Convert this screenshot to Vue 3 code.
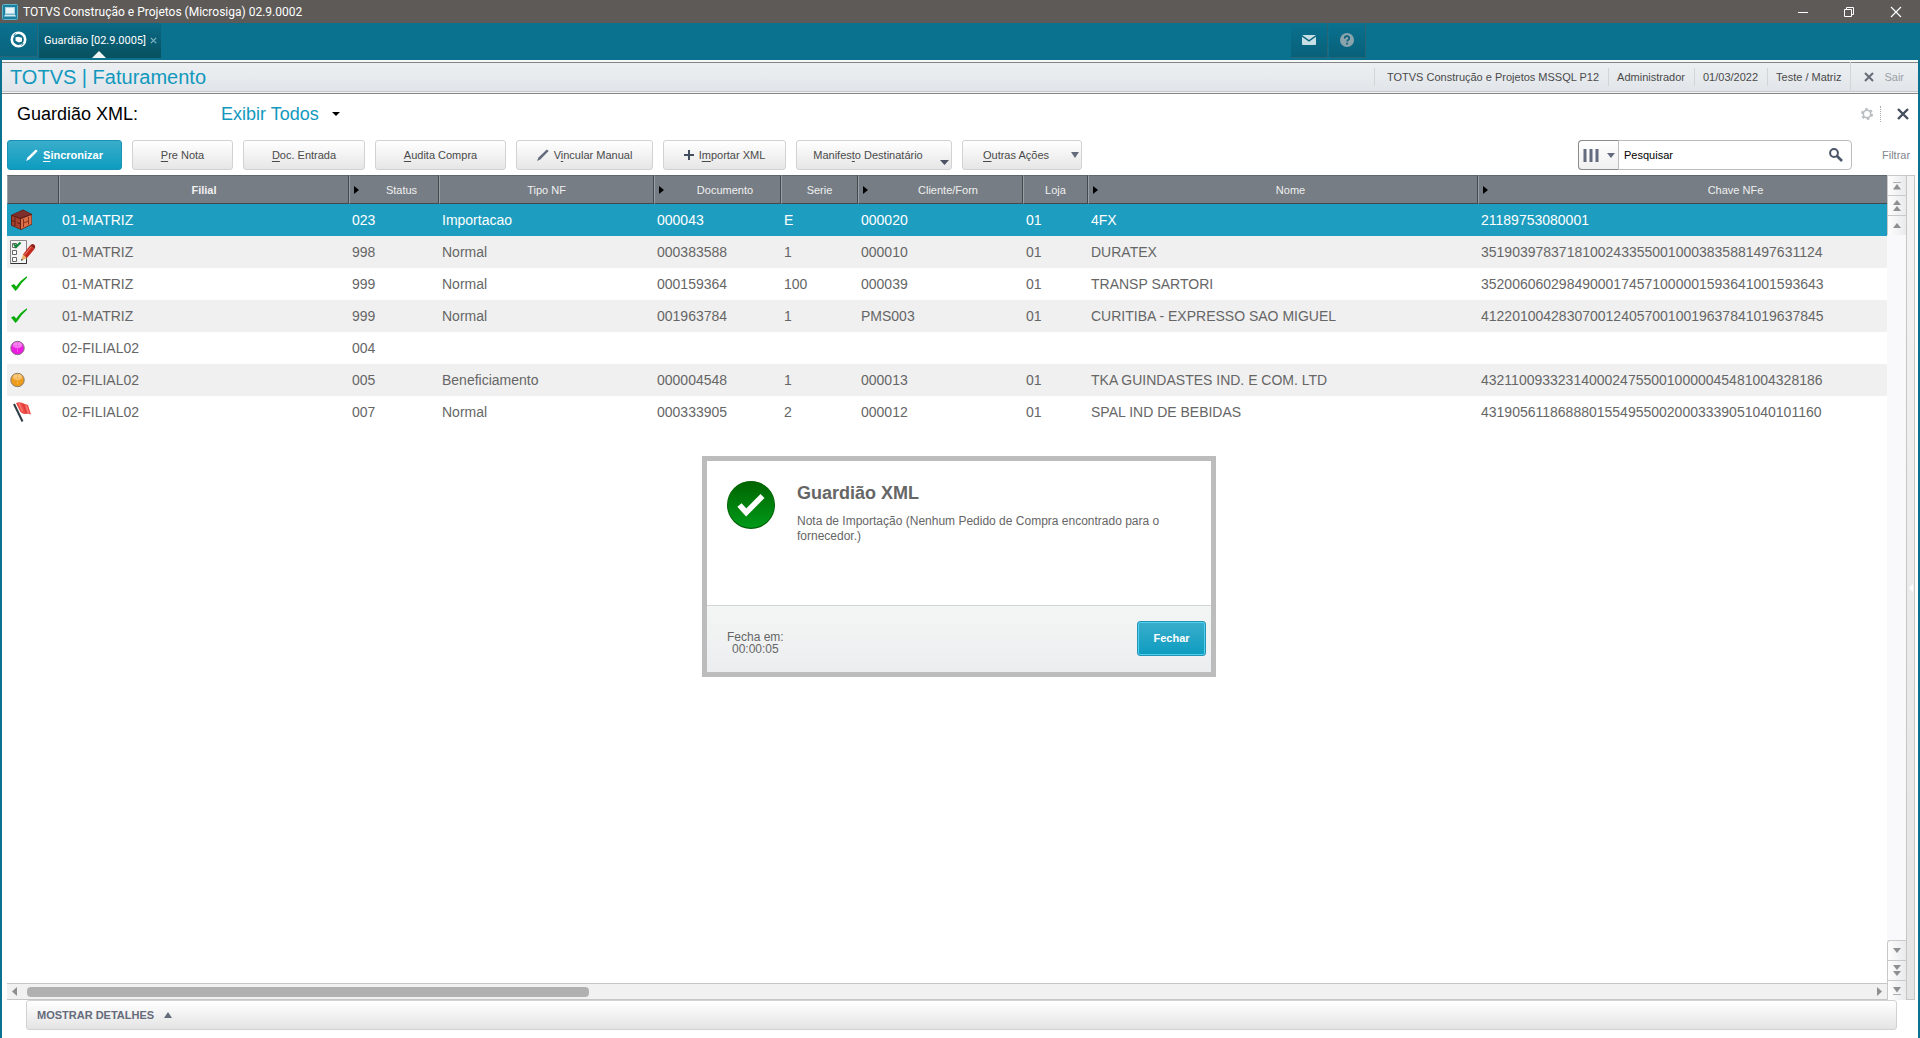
<script setup>
import { ref } from 'vue'

const search = ref('Pesquisar')
const filter = ref('Exibir Todos')

const columns = [
  { label: '', width: 52 },
  { label: 'Filial', width: 290, bold: true },
  { label: 'Status', width: 90, sort: true },
  { label: 'Tipo NF', width: 215 },
  { label: 'Documento', width: 127, sort: true },
  { label: 'Serie', width: 77 },
  { label: 'Cliente/Forn', width: 165, sort: true },
  { label: 'Loja', width: 65 },
  { label: 'Nome', width: 390, sort: true },
  { label: 'Chave NFe', width: 500, sort: true }
]

const rows = [
  { icon: 'box', cells: ['01-MATRIZ', '023', 'Importacao', '000043', 'E', '000020', '01', '4FX', '21189753080001'] },
  { icon: 'list', cells: ['01-MATRIZ', '998', 'Normal', '000383588', '1', '000010', '01', 'DURATEX', '35190397837181002433550010003835881497631124'] },
  { icon: 'check', cells: ['01-MATRIZ', '999', 'Normal', '000159364', '100', '000039', '01', 'TRANSP SARTORI', '35200606029849000174571000001593641001593643'] },
  { icon: 'check', cells: ['01-MATRIZ', '999', 'Normal', '001963784', '1', 'PMS003', '01', 'CURITIBA - EXPRESSO SAO MIGUEL', '41220100428307001240570010019637841019637845'] },
  { icon: 'pink', cells: ['02-FILIAL02', '004', '', '', '', '', '', '', ''] },
  { icon: 'orange', cells: ['02-FILIAL02', '005', 'Beneficiamento', '000004548', '1', '000013', '01', 'TKA GUINDASTES IND. E COM. LTD', '43211009332314000247550010000045481004328186'] },
  { icon: 'flag', cells: ['02-FILIAL02', '007', 'Normal', '000333905', '2', '000012', '01', 'SPAL IND DE BEBIDAS', '43190561186888015549550020003339051040101160'] }
]
</script>

<template>
  <div class="app">
    <header class="titlebar">
      <svg class="app-icon" width="16" height="16" viewBox="0 0 16 16">
        <rect x="0.5" y="0.5" width="15" height="15" rx="1" fill="#1b7f9f" stroke="#5fb4cc" />
        <rect x="3.5" y="3.5" width="9" height="6" fill="#e8f4f8" stroke="#a9d5e2" />
        <path d="M2 12.5h12l-1-2H3z" fill="#d2ebf3" />
      </svg>
      <span class="title">TOTVS Construção e Projetos (Microsiga) 02.9.0002</span>
      <div class="win-buttons">
        <button aria-label="Minimizar"><svg width="12" height="12" viewBox="0 0 12 12"><path d="M1 6.5h10" stroke="#fff" /></svg></button>
        <button aria-label="Restaurar"><svg width="12" height="12" viewBox="0 0 12 12"><path d="M1.500 3.500h7v7h-7zM3.500 3.500v-2h7v7h-2" fill="none" stroke="#fff" /></svg></button>
        <button aria-label="Fechar janela"><svg width="12" height="12" viewBox="0 0 12 12"><path d="M1 1l10 10M11 1L1 11" stroke="#fff" stroke-width="1.200" /></svg></button>
      </div>
    </header>

    <nav class="tabs">
      <button class="home" aria-label="Início">
        <svg width="17" height="17" viewBox="0 0 17 17">
          <circle cx="8.500" cy="8.500" r="6.700" fill="none" stroke="#fff" stroke-width="2.600" />
          <path d="M5.500 6.200L8 5.800l4 1v3.600l-3.200 1-3.300-1.700z" fill="#fff" />
          <path d="M5.500 2.500L3.800 5M11.500 14.500l1.700-2.500" stroke="#0a6c89" />
        </svg>
      </button>
      <button class="tab">
        <span>Guardião [02.9.0005]</span>
        <svg width="7" height="7" viewBox="0 0 7 7"><path d="M0.800 0.800l5.400 5.400M6.200 0.800L0.800 6.200" stroke="#7fb4c2" stroke-width="1.200" /></svg>
        <i class="tab-mark"></i>
      </button>
      <div class="tab-tools">
        <button aria-label="Mensagens">
          <svg width="14" height="10" viewBox="0 0 14 10"><rect width="14" height="10" rx="1" fill="#c9dfe6" /><path d="M0 0.800l7 5 7-5" fill="none" stroke="#0a6680" stroke-width="1.400" /></svg>
        </button>
        <button aria-label="Ajuda">
          <svg width="14" height="14" viewBox="0 0 14 14"><circle cx="7" cy="7" r="7" fill="#8ba3ad" /><path d="M4.700 5.400C4.700 2.400 9.300 2.400 9.300 5.200C9.300 6.800 7.100 6.900 7.100 8.600M7.100 9.800v1.600" fill="none" stroke="#0a6179" stroke-width="1.700" /></svg>
        </button>
      </div>
    </nav>

    <div class="window">
      <div class="module">
        <h1>TOTVS | Faturamento</h1>
        <ul>
          <li>TOTVS Construção e Projetos MSSQL P12</li>
          <li>Administrador</li>
          <li>01/03/2022</li>
          <li>Teste / Matriz</li>
        </ul>
        <button class="exit">
          <svg width="10" height="10" viewBox="0 0 10 10"><path d="M1 1l8 8M9 1L1 9" stroke="#666d78" stroke-width="2" /></svg>
          Sair
        </button>
      </div>

      <main>
        <div class="heading">
          <label for="view">Guardião XML:</label>
          <div class="view">
            <select id="view" v-model="filter"><option>Exibir Todos</option></select>
            <svg width="8" height="4" viewBox="0 0 8 4"><path d="M0 0h8L4 4z" fill="#000" /></svg>
          </div>
          <div class="heading-tools">
            <button aria-label="Configurar">
              <svg width="12" height="12" viewBox="0 0 12 12"><circle cx="6" cy="6" r="5" fill="none" stroke="#b9bcc0" stroke-width="2" stroke-dasharray="2.600 2.640" /><circle cx="6" cy="6" r="3.700" fill="none" stroke="#b9bcc0" stroke-width="1.600" /></svg>
            </button>
            <button class="close" aria-label="Fechar rotina">
              <svg width="12" height="12" viewBox="0 0 12 12"><path d="M1 1l10 10M11 1L1 11" stroke="#434e5f" stroke-width="2.400" /></svg>
            </button>
          </div>
        </div>

        <div class="toolbar">
          <button class="btn primary w-sync">
            <svg width="12" height="12" viewBox="0 0 12 12"><path d="M0 12l1.500-3.500L9.800 0.400 11.700 2 3.300 10.500z" fill="#fff" /></svg>
            <span><u>S</u>incronizar</span>
          </button>
          <button class="btn w-pre"><span><u>P</u>re Nota</span></button>
          <button class="btn w-doc"><span><u>D</u>oc. Entrada</span></button>
          <button class="btn w-audit"><span><u>A</u>udita Compra</span></button>
          <button class="btn w-link">
            <svg width="12" height="12" viewBox="0 0 12 12"><path d="M0 12l1.500-3.500L9.800 0.400 11.700 2 3.300 10.500z" fill="#646b7b" /></svg>
            <span>V<u>i</u>ncular Manual</span>
          </button>
          <button class="btn w-import">
            <svg width="10" height="10" viewBox="0 0 10 10"><path d="M5 0v10M0 5h10" stroke="#434e5f" stroke-width="2" /></svg>
            <span>I<u>m</u>portar XML</span>
          </button>
          <button class="btn menu low w-manif">
            <span>Manifes<u>t</u>o Destinatário</span>
            <svg width="9" height="5" viewBox="0 0 9 5"><path d="M0 0h9L4.500 5z" fill="#4b5262" /></svg>
          </button>
          <button class="btn menu w-other">
            <span><u>O</u>utras Ações</span>
            <svg width="8" height="6" viewBox="0 0 8 6"><path d="M0 0h8L4 6z" fill="#646b7b" /></svg>
          </button>

          <div class="search">
            <button class="cols" aria-label="Colunas">
              <svg width="16" height="13" viewBox="0 0 16 13"><path d="M2 0v13M8 0v13M14 0v13" stroke="#646b7f" stroke-width="3" /></svg>
              <svg width="8" height="5" viewBox="0 0 8 5"><path d="M0 0h8L4 5z" fill="#646b7f" /></svg>
            </button>
            <input v-model="search" type="text" aria-label="Pesquisar" />
            <button class="go" aria-label="Buscar">
              <svg width="14" height="14" viewBox="0 0 14 14"><circle cx="5" cy="5" r="3.900" fill="none" stroke="#4b5668" stroke-width="2" /><path d="M8 8l5 5" stroke="#4b5668" stroke-width="2.600" /></svg>
            </button>
          </div>
          <a class="filter" href="#">Filtrar</a>
        </div>

        <div class="grid">
          <div class="sheet">
            <div class="table-view">
              <table>
                <colgroup><col v-for="(c, i) in columns" :key="i" :style="{ width: c.width + 'px' }" /></colgroup>
                <thead>
                  <tr>
                    <th v-for="(c, i) in columns" :key="i" :class="{ sort: c.sort, bold: c.bold }">
                      <div>
                        <svg v-if="c.sort" width="5" height="8" viewBox="0 0 5 8"><path d="M0 0l5 4-5 4z" fill="#000" /></svg>
                        <span>{{ c.label }}</span>
                      </div>
                    </th>
                  </tr>
                </thead>
                <tbody>
                  <tr v-for="(r, i) in rows" :key="i" :class="{ selected: i === 0 }">
                    <td>
                      <svg v-if="r.icon === 'box'" width="24" height="24" viewBox="0 0 24 24">
                        <path d="M1 7L13 1.500L22 6v10.500L11 22L1 17.500z" fill="#5e1d16" />
                        <path d="M2 7l11-4.800L21.500 6L10.500 9.800z" fill="#80302c" />
                        <path d="M2 8l8 3v10L2 17z" fill="#a8402e" />
                        <path d="M11 11L21.500 7v9L11 21.200z" fill="#d9704a" />
                        <path d="M5 9.500v8.500M2 12.500l3 1.200M7 14.500l3 1.300" stroke="#5e1d16" />
                        <path d="M13.500 11v8M18.500 9v7.500M13.500 15l5-2" fill="none" stroke="#8a3018" />
                      </svg>
                      <svg v-else-if="r.icon === 'list'" width="26" height="26" viewBox="0 0 26 26">
                        <path d="M0.500 1.500h16v23h-16z" fill="#f4f4f4" stroke="#888" />
                        <path d="M0.500 24.500h16v-10" fill="none" stroke="#333" />
                        <path d="M2.500 4.500h4v4h-4zM2.500 11.500h4v4h-4zM2.500 18.500h4v4h-4z" fill="#fff" stroke="#666" />
                        <path d="M4 5l2 3L10.500 3.500" fill="none" stroke="#14863a" stroke-width="2.200" />
                        <path d="M11 21.500l2-6 4 3.800z" fill="#e9b469" />
                        <path d="M13 15.500l7-9 4.500 3.500-7.500 9z" fill="#c5291d" />
                        <path d="M14.500 16l7.500-9" stroke="#ee8d78" />
                        <path d="M20 6.500q2-2.500 4-1t0.500 4.500z" fill="#8d2019" />
                        <path d="M11 21.800l0.700-2 1.300 1.200z" fill="#222" />
                      </svg>
                      <svg v-else-if="r.icon === 'check'" width="18" height="24" viewBox="0 0 18 24">
                        <path d="M1 13.500l3-1.500 2.200 2.600Q11 7.500 17 4.200v1.600Q11.500 10.500 7.500 17L5.500 19z" fill="#0aad0a" />
                      </svg>
                      <svg v-else-if="r.icon === 'pink'" width="15" height="24" viewBox="0 0 15 24">
                        <circle cx="7.500" cy="12" r="6.700" fill="#ec1be0" stroke="#83727f" />
                        <ellipse cx="7.500" cy="9" rx="4.500" ry="3" fill="#f783ee" />
                        <path d="M2.500 10h10M7.500 6v10" stroke="#f45dea" stroke-width="0.800" />
                      </svg>
                      <svg v-else-if="r.icon === 'orange'" width="15" height="24" viewBox="0 0 15 24">
                        <circle cx="7.500" cy="12" r="6.700" fill="#ee9c1b" stroke="#8a7c68" />
                        <ellipse cx="7.500" cy="9" rx="4.500" ry="3" fill="#f9ca7c" />
                        <path d="M2.500 10h10M7.500 6v10" stroke="#f5b450" stroke-width="0.800" />
                      </svg>
                      <svg v-else width="24" height="24" viewBox="0 0 24 24">
                        <path d="M4 4l8.500 17.500" stroke="#2e3c44" stroke-width="2" />
                        <path d="M6 3Q9 1.500 12 2.800T18 5l3 9.500q-3-1-5.500-0.500T10.500 12z" fill="#ef4a45" />
                        <path d="M9 3l3.500 8.500M16 5.500l2.500 8" stroke="#fb7b76" stroke-width="1.400" />
                        <path d="M13 4l3.500 9" stroke="#d23b37" />
                      </svg>
                    </td>
                    <td v-for="(c, j) in r.cells" :key="j">{{ c }}</td>
                  </tr>
                </tbody>
              </table>
            </div>
            <div class="hscroll">
              <button aria-label="Esquerda"><svg width="5" height="9" viewBox="0 0 5 9"><path d="M5 0v9L0 4.500z" fill="#8f8f8f" /></svg></button>
              <div class="track"><div class="thumb"></div></div>
              <button aria-label="Direita"><svg width="5" height="9" viewBox="0 0 5 9"><path d="M0 0v9l5-4.500z" fill="#8f8f8f" /></svg></button>
            </div>
          </div>

          <div class="vscroll">
            <button aria-label="Início da lista"><svg width="8" height="8" viewBox="0 0 8 8"><path d="M0 0.500h8" stroke="#b0b0b0" /><path d="M0 7.500L4 2l4 5.500z" fill="#8f8f8f" /></svg></button>
            <button aria-label="Página acima"><svg width="8" height="12" viewBox="0 0 8 12"><path d="M0 5L4 0l4 5zM0 11l4-5 4 5z" fill="#8f8f8f" /></svg></button>
            <button aria-label="Linha acima"><svg width="8" height="5" viewBox="0 0 8 5"><path d="M0 5L4 0l4 5z" fill="#8f8f8f" /></svg></button>
            <div class="vtrack"></div>
            <button class="down" aria-label="Linha abaixo"><svg width="8" height="5" viewBox="0 0 8 5"><path d="M0 0h8L4 5z" fill="#8f8f8f" /></svg></button>
            <button aria-label="Página abaixo"><svg width="8" height="12" viewBox="0 0 8 12"><path d="M0 0h8L4 5zM0 6h8l-4 5z" fill="#8f8f8f" /></svg></button>
            <button aria-label="Fim da lista"><svg width="8" height="8" viewBox="0 0 8 8"><path d="M0 7.500h8" stroke="#b0b0b0" /><path d="M0 0h8L4 5.500z" fill="#8f8f8f" /></svg></button>
          </div>
          <button class="splitter" aria-label="Expandir painel"><svg width="4" height="8" viewBox="0 0 4 8"><path d="M4 0v8L0 4z" fill="#fff" /></svg></button>
        </div>

        <button class="details">
          MOSTRAR DETALHES
          <svg width="8" height="6" viewBox="0 0 8 6"><path d="M0 6l4-6 4 6z" fill="#646b7b" /></svg>
        </button>

        <div class="overlay">
          <section class="dialog" role="dialog" aria-labelledby="dlg-title">
            <div class="dialog-body">
              <svg width="48" height="48" viewBox="0 0 48 48">
                <defs><linearGradient id="ok" x1="0" y1="0" x2="0" y2="1"><stop offset="0" stop-color="#006400" /><stop offset="1" stop-color="#009a1a" /></linearGradient></defs>
                <circle cx="24" cy="24" r="24" fill="#005c06" />
                <circle cx="24" cy="23.500" r="23.300" fill="url(#ok)" />
                <path d="M12.500 24l6.700 7.500L35.500 15" fill="none" stroke="#fff" stroke-width="5.600" />
              </svg>
              <div>
                <h2 id="dlg-title">Guardião XML</h2>
                <p>Nota de Importação (Nenhum Pedido de Compra encontrado para o fornecedor.)</p>
              </div>
            </div>
            <footer>
              <p>Fecha em:<br />00:00:05</p>
              <button>Fechar</button>
            </footer>
          </section>
        </div>
      </main>
    </div>
  </div>
</template>

<style>
body {
  margin: 0;
  background: #fff;
}
</style>

<style scoped>
.app {
  display: flex;
  flex-direction: column;
  min-height: 100vh;
  font: 11px/14px "Liberation Sans", Arial, sans-serif;
  color: #4a4a4a;
}
* {
  box-sizing: border-box;
}
button, input, select {
  margin: 0;
  padding: 0;
  border: 0;
  background: none;
  font: inherit;
  color: inherit;
}
svg {
  display: block;
  flex: none;
}
h1, h2, p, ul {
  margin: 0;
  padding: 0;
}

.titlebar {
  display: flex;
  align-items: center;
  height: 23px;
  padding-left: 2px;
  background: #5e5a57;
  color: #fff;
}
.title {
  margin-left: 5px;
  font: 12px/16px "Segoe UI", Roboto, sans-serif;
}
.win-buttons {
  display: flex;
  margin-left: auto;
}
.win-buttons button {
  display: grid;
  place-items: center;
  width: 46px;
  height: 20px;
}
.win-buttons button:last-child {
  width: 48px;
}

.tabs {
  display: flex;
  height: 37px;
  padding-bottom: 2px;
  background: #0a718f;
}
.home {
  display: grid;
  place-items: center;
  width: 38px;
  height: 34px;
  border-right: 1px solid #2a6577;
  border-bottom: 1px solid #2a6577;
  background: linear-gradient(#0a718f, #0a647e);
}
.tab {
  position: relative;
  display: flex;
  align-items: center;
  justify-content: space-between;
  width: 122px;
  height: 35px;
  margin-left: 1px;
  padding: 0 4px 0 5px;
  background: linear-gradient(#0a6b87, #08505f);
  color: #fff;
  font: 11px/14px "Segoe UI", Roboto, sans-serif;
  white-space: nowrap;
}
.tab-mark {
  position: absolute;
  left: 53px;
  bottom: 0;
  border: 7px solid transparent;
  border-top: 0;
  border-bottom-color: #f2f5f5;
}
.tab-tools {
  display: flex;
  gap: 1px;
  margin-left: auto;
  margin-right: 554px;
}
.tab-tools button {
  display: grid;
  place-items: center;
  width: 37px;
  height: 35px;
  border-right: 1px solid #2a6577;
  border-bottom: 1px solid #2a6577;
  background: linear-gradient(#0a718f, #08607a);
}

.window {
  display: flex;
  flex: 1;
  flex-direction: column;
  border: 2px solid #0a718f;
  border-width: 0 2px;
}
.module {
  display: flex;
  height: 34px;
  border-top: 2px solid #f5f8f7;
  background: linear-gradient(#edf0f3, #e0e4e8);
  box-shadow: inset 0 1px #858585, inset 0 -1px #858585, inset 0 -2px #f5f5f5, inset 0 -3px #c5c9cc;
}
h1 {
  flex: 1;
  padding-left: 8px;
  color: #1298bd;
  font-size: 20px;
  font-weight: 400;
  line-height: 30px;
}
ul {
  display: flex;
  align-items: center;
  height: 30px;
  list-style: none;
}
li {
  height: 18px;
  padding: 0 9px 0 8px;
  border-left: 1px solid #d0d6d6;
  line-height: 18px;
}
li:first-child {
  padding-left: 12px;
}
.exit {
  display: flex;
  align-items: center;
  gap: 10px;
  height: 30px;
  padding: 0 14px 0 13px;
  border-left: 1px solid #d0d6d6;
  color: #9aa0a6;
}

main {
  position: relative;
  display: flex;
  flex: 1;
  flex-direction: column;
  min-height: 640px;
  padding: 0 3px 8px 5px;
}
.heading {
  display: flex;
  align-items: center;
  height: 40px;
  padding-left: 10px;
  font-size: 18px;
  line-height: 22px;
}
.heading label {
  width: 204px;
  color: #000;
}
.view {
  display: flex;
  align-items: center;
  gap: 12px;
  color: #1298bd;
}
.view select {
  appearance: none;
}
.heading-tools {
  display: flex;
  align-items: center;
  gap: 7px;
  margin-left: auto;
  padding-right: 6px;
}
.heading-tools .close {
  padding: 2px 0 2px 16px;
  border-left: 1px dotted #aaa;
}

.toolbar {
  display: flex;
  align-items: center;
  gap: 10px;
  margin: 6px 0 5px;
}
.btn {
  position: relative;
  display: flex;
  align-items: center;
  justify-content: center;
  gap: 5px;
  height: 30px;
  border: 1px solid #d2d2d2;
  border-radius: 3px;
  background: linear-gradient(#fff, #e6e6e6);
  white-space: nowrap;
}
u {
  text-underline-offset: 2px;
}
.primary {
  border-color: #1a93b3;
  background: linear-gradient(#3aadcb, #0d9cc0);
  color: #fff;
  font-weight: 700;
}
.menu {
  padding-right: 12px;
}
.menu svg {
  position: absolute;
  right: 2px;
  top: 11px;
}
.low svg {
  top: 19px;
}
.w-sync { width: 115px; }
.w-pre { width: 101px; }
.w-doc { width: 122px; }
.w-audit { width: 131px; }
.w-link { width: 137px; }
.w-import { width: 123px; }
.w-manif { width: 156px; }
.w-other { width: 120px; }
.search {
  display: flex;
  width: 274px;
  height: 30px;
  margin-left: auto;
  border: 1px solid #bcbcbc;
  border-radius: 4px;
  background: #fff;
}
.cols {
  display: flex;
  align-items: center;
  justify-content: center;
  gap: 8px;
  width: 41px;
  margin: -1px 0 -1px -1px;
  border: 1px solid #8b8b8b;
  border-right-color: #bcbcbc;
  border-radius: 4px 0 0 4px;
  background: linear-gradient(#fff, #f0f0f0);
}
.search input {
  flex: 1;
  min-width: 0;
  padding-left: 5px;
  color: #000;
  outline: 0;
}
.go {
  padding: 0 8px;
}
.filter {
  width: 53px;
  padding-left: 20px;
  color: #82868c;
  text-decoration: none;
}

.grid {
  display: flex;
  flex: 1;
}
.sheet {
  display: flex;
  flex: 1;
  flex-direction: column;
  min-width: 0;
}
.table-view {
  flex: 1;
  overflow: hidden;
}
table {
  width: 1971px;
  min-width: 100%;
  table-layout: fixed;
  border-collapse: separate;
  border-spacing: 0;
}
th {
  height: 29px;
  padding: 0;
  border: 1px solid #44494d;
  border-left-color: #9aa0a5;
  border-top-color: #5f666c;
  background: #767d84;
  color: #f0f0f0;
  font-weight: 400;
}
th.bold {
  font-weight: 700;
}
th div {
  display: flex;
  align-items: center;
}
th span {
  flex: 1;
}
.sort svg {
  margin: 0 6px 0 4px;
}
td {
  height: 32px;
  padding: 0 3px;
  color: #666;
  font-size: 14px;
  white-space: nowrap;
}
tr:nth-child(even) td {
  background: #f0f0f0;
}
.selected td {
  background: #1d9dbf;
  color: #fff;
}
.hscroll {
  display: flex;
  align-items: center;
  height: 17px;
  padding: 0 5px;
  border: 1px solid #c6c6c6;
  border-width: 1px 0;
  background: #f1f1f1;
}
.track {
  flex: 1;
  padding: 0 10px;
}
.thumb {
  width: 562px;
  max-width: 100%;
  height: 10px;
  border-radius: 4px;
  background: #b1b1b1;
}
.vscroll {
  display: flex;
  flex-direction: column;
  width: 19px;
  background: #f9f9fb;
}
.vscroll button {
  display: grid;
  place-items: center;
  height: 20px;
  border: 1px solid #c9c9c9;
  border-width: 1px 0 0 1px;
  background: linear-gradient(90deg, #fdfdfd, #e9eaec);
}
.vtrack {
  flex: 1;
}
.vscroll .down {
  border-top-left-radius: 3px;
}
.splitter {
  display: grid;
  place-items: center;
  width: 9px;
  border: 1px solid #c6c6c6;
  background: linear-gradient(#f3f3f3, #e4e4e4);
}
.details {
  display: flex;
  align-items: center;
  gap: 10px;
  height: 30px;
  margin: 0 18px 0 19px;
  padding-left: 10px;
  border: 1px solid #d2d2d2;
  border-radius: 3px;
  background: linear-gradient(#fff, #e4e4e4);
  color: #646b7b;
  font-size: 11px;
  font-weight: 700;
}

.overlay {
  position: absolute;
  inset: 0 2px 0 0;
  display: grid;
  place-items: center;
}
.dialog {
  width: 514px;
  border: 5px solid #bcbcbc;
  background: #fff;
  color: #666;
  font-size: 12px;
  line-height: 15px;
}
.dialog-body {
  display: flex;
  gap: 22px;
  height: 144px;
  padding: 20px 36px 0 20px;
}
h2 {
  padding: 2px 0 11px;
  font-size: 18px;
  line-height: 20px;
}
footer {
  display: flex;
  justify-content: space-between;
  height: 67px;
  padding: 15px 5px 0 20px;
  border-top: 1px solid #d3d6d5;
  background: linear-gradient(#f4f6f5, #ecedef);
}
footer p {
  padding-top: 10px;
  line-height: 12px;
  text-align: center;
}
footer button {
  width: 69px;
  height: 35px;
  border: 1px solid #2593b2;
  border-radius: 3px;
  background: linear-gradient(#3aadcb, #0d9cc0);
  box-shadow: inset 0 0 0 1px #4fd0f0;
  color: #fff;
  font-size: 11px;
  font-weight: 700;
}
</style>
